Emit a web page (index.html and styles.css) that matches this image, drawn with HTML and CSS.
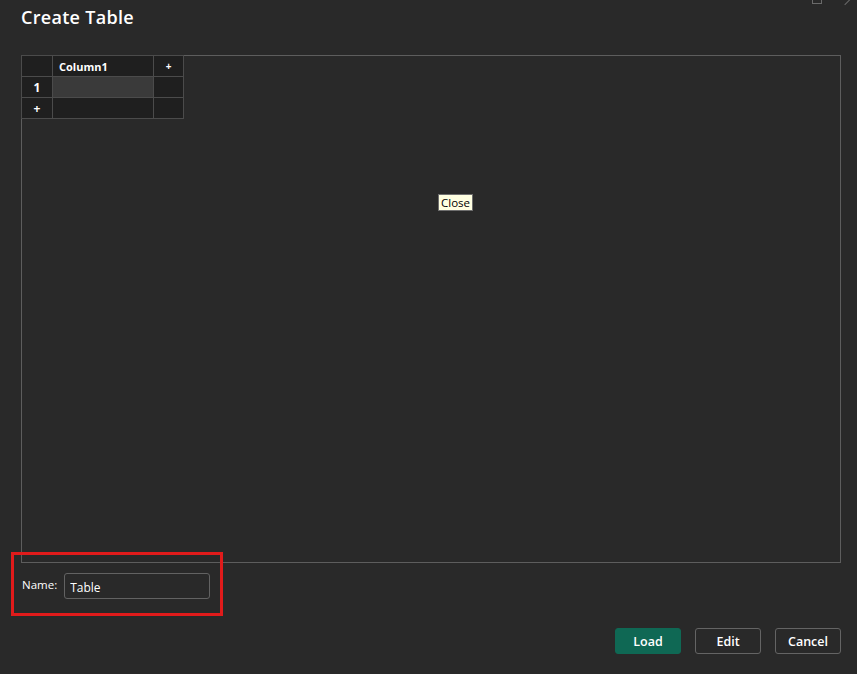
FILE: index.html
```html
<!DOCTYPE html>
<html>
<head>
<meta charset="utf-8">
<link rel="stylesheet" href="styles.css">
</head>
<body>
<div class="window">
  <div class="winctl">
    <span class="maxbox"></span>
    <span class="closex"></span>
  </div>
  <h1 class="title">Create Table</h1>
  <div class="panel">
    <table class="grid">
      <tr class="hrow">
        <th class="corner"></th>
        <th class="colhead">Column1</th>
        <th class="addcol">+</th>
      </tr>
      <tr>
        <th class="rowhead">1</th>
        <td class="cell selected"></td>
        <td class="cell"></td>
      </tr>
      <tr>
        <th class="rowhead addrow">+</th>
        <td class="cell"></td>
        <td class="cell"></td>
      </tr>
    </table>
    <div class="tooltip">Close</div>
  </div>
  <div class="namerow">
    <label class="namelabel">Name:</label>
    <input class="nameinput" type="text" value="Table">
    <div class="highlight"></div>
  </div>
  <div class="buttons">
    <button class="btn primary">Load</button>
    <button class="btn">Edit</button>
    <button class="btn">Cancel</button>
  </div>
</div>
</body>
</html>
```
FILE: styles.css
```css
html, body {
  margin: 0;
  padding: 0;
  background: #292929;
  width: 857px;
  height: 674px;
  overflow: hidden;
  font-family: "Open Sans", "Noto Sans", sans-serif;
  color: #ffffff;
}
.window {
  position: relative;
  width: 857px;
  height: 674px;
  display: flex;
  flex-direction: column;
}
.winctl {
  position: absolute;
  top: 0;
  right: 0;
  width: 60px;
  height: 8px;
}
.maxbox {
  position: absolute;
  left: 15px;
  top: -6px;
  width: 8px;
  height: 8px;
  border: 1px solid #6a6a6a;
}
.closex {
  position: absolute;
  left: 50px;
  top: -2px;
  width: 1px;
  height: 8px;
  background: #6a6a6a;
  transform: rotate(45deg);
}
.title {
  margin: 0;
  padding: 5px 0 0 21px;
  height: 55px;
  flex: 0 0 55px;
  box-sizing: border-box;
  font-size: 18px;
  font-weight: 600;
  line-height: 25px;
  letter-spacing: 0.3px;
}
.panel {
  position: relative;
  margin-left: 21px;
  width: 820px;
  height: 508px;
  flex: 0 0 508px;
  box-sizing: border-box;
  border: 1px solid #5d5d5d;
}
.grid {
  border-collapse: collapse;
  margin: -1px 0 0 -1px;
  background: #1f1f1f;
  font-size: 11px;
  font-weight: 600;
}
.grid th, .grid td {
  border: 1px solid #4b4b4b;
  padding: 0;
  height: 20px;
}
.corner, .rowhead { width: 30px; text-align: center; }
.colhead { width: 101px; text-align: left; padding-left: 6px !important; box-sizing: border-box; }
.addcol, .grid td.cell:last-child { width: 29px; text-align: center; }
.addcol, .addrow { font-size: 10px; }
.rowhead { font-size: 12px; font-weight: 700; }
.selected { background: #3a3a3a; }
.tooltip {
  position: absolute;
  left: 416px;
  top: 138px;
  background: #ffffe1;
  color: #000;
  border: 1px solid #6e6e6e;
  font-size: 11.5px;
  line-height: 15px;
  padding: 0 2px;
  font-family: "Open Sans", sans-serif;
}
.namerow {
  position: relative;
  display: flex;
  align-items: center;
  margin-top: 10px;
  padding-left: 22px;
  height: 26px;
}
.namelabel {
  font-size: 11.5px;
  margin-right: 7px;
  margin-top: -4px;
}
.nameinput {
  width: 146px;
  height: 26px;
  box-sizing: border-box;
  background: #292929;
  border: 1px solid #626262;
  border-radius: 3px;
  color: #fff;
  font-family: "Open Sans", sans-serif;
  font-size: 12px;
  padding: 2px 5px 0;
  outline: none;
}
.highlight {
  position: absolute;
  left: 11px;
  top: -21px;
  width: 212px;
  height: 64px;
  box-sizing: border-box;
  border: 3px solid #e01b1b;
}
.buttons {
  display: flex;
  justify-content: flex-end;
  gap: 14px;
  padding-right: 16px;
  margin-top: 29px;
}
.btn {
  width: 66px;
  height: 26px;
  box-sizing: border-box;
  background: transparent;
  border: 1px solid #646464;
  border-radius: 3px;
  color: #fff;
  font-family: "Open Sans", sans-serif;
  font-weight: 600;
  font-size: 12.5px;
  padding: 0;
}
.btn.primary {
  background: #0f6854;
  border-color: #0f6854;
}
```
